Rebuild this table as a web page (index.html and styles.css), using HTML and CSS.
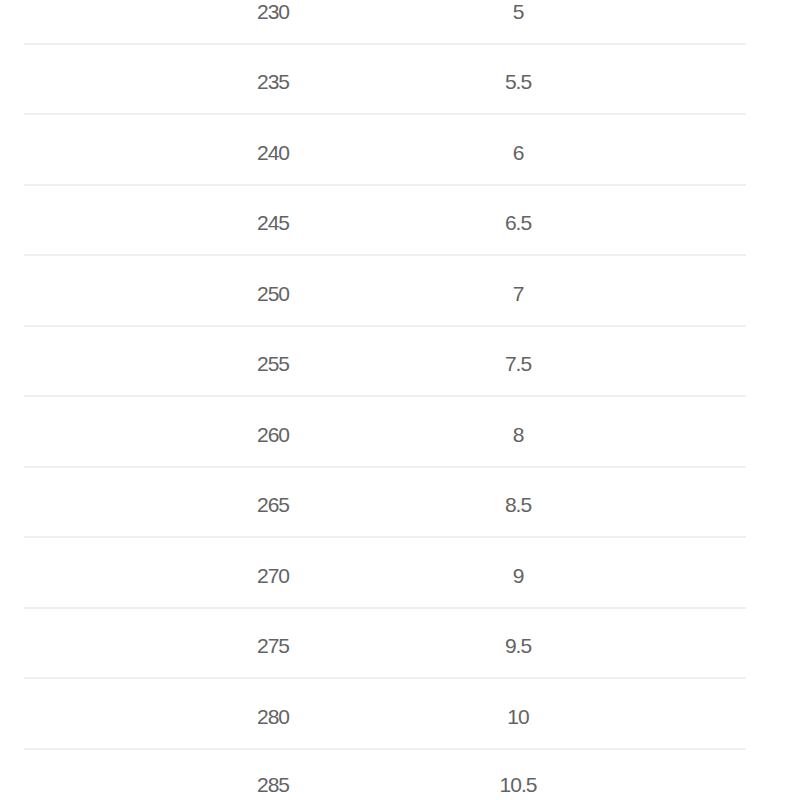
FILE: index.html
```html
<!DOCTYPE html>
<html>
<head>
<meta charset="utf-8">
<link rel="stylesheet" href="styles.css">
</head>
<body>
<div class="size-table">
  <div class="row"><span class="cell mm">230</span><span class="cell us">5</span></div>
  <div class="row"><span class="cell mm">235</span><span class="cell us">5.5</span></div>
  <div class="row"><span class="cell mm">240</span><span class="cell us">6</span></div>
  <div class="row"><span class="cell mm">245</span><span class="cell us">6.5</span></div>
  <div class="row"><span class="cell mm">250</span><span class="cell us">7</span></div>
  <div class="row"><span class="cell mm">255</span><span class="cell us">7.5</span></div>
  <div class="row"><span class="cell mm">260</span><span class="cell us">8</span></div>
  <div class="row"><span class="cell mm">265</span><span class="cell us">8.5</span></div>
  <div class="row"><span class="cell mm">270</span><span class="cell us">9</span></div>
  <div class="row"><span class="cell mm">275</span><span class="cell us">9.5</span></div>
  <div class="row"><span class="cell mm">280</span><span class="cell us">10</span></div>
  <div class="row last"><span class="cell mm">285</span><span class="cell us">10.5</span></div>
</div>
</body>
</html>
```

FILE: styles.css
```css
html, body {
  margin: 0;
  padding: 0;
  background: #ffffff;
  overflow: hidden;
}

.size-table {
  margin: -26px 0 0 24px;
  width: 722px;
  font-family: "Liberation Sans", Arial, sans-serif;
  font-size: 21px;
  color: #636363;
  letter-spacing: -1px;
}

.row {
  box-sizing: border-box;
  height: 70.5px;
  padding-top: 6px;
  border-bottom: 2px solid #efefef;
  display: grid;
  grid-template-columns: 149px 200px 45px 200px;
  align-items: center;
}

.row.last {
  border-bottom: none;
  padding-top: 0;
}

.cell {
  text-align: center;
  line-height: 1;
}

.mm {
  grid-column: 2;
}

.us {
  grid-column: 4;
}
```
